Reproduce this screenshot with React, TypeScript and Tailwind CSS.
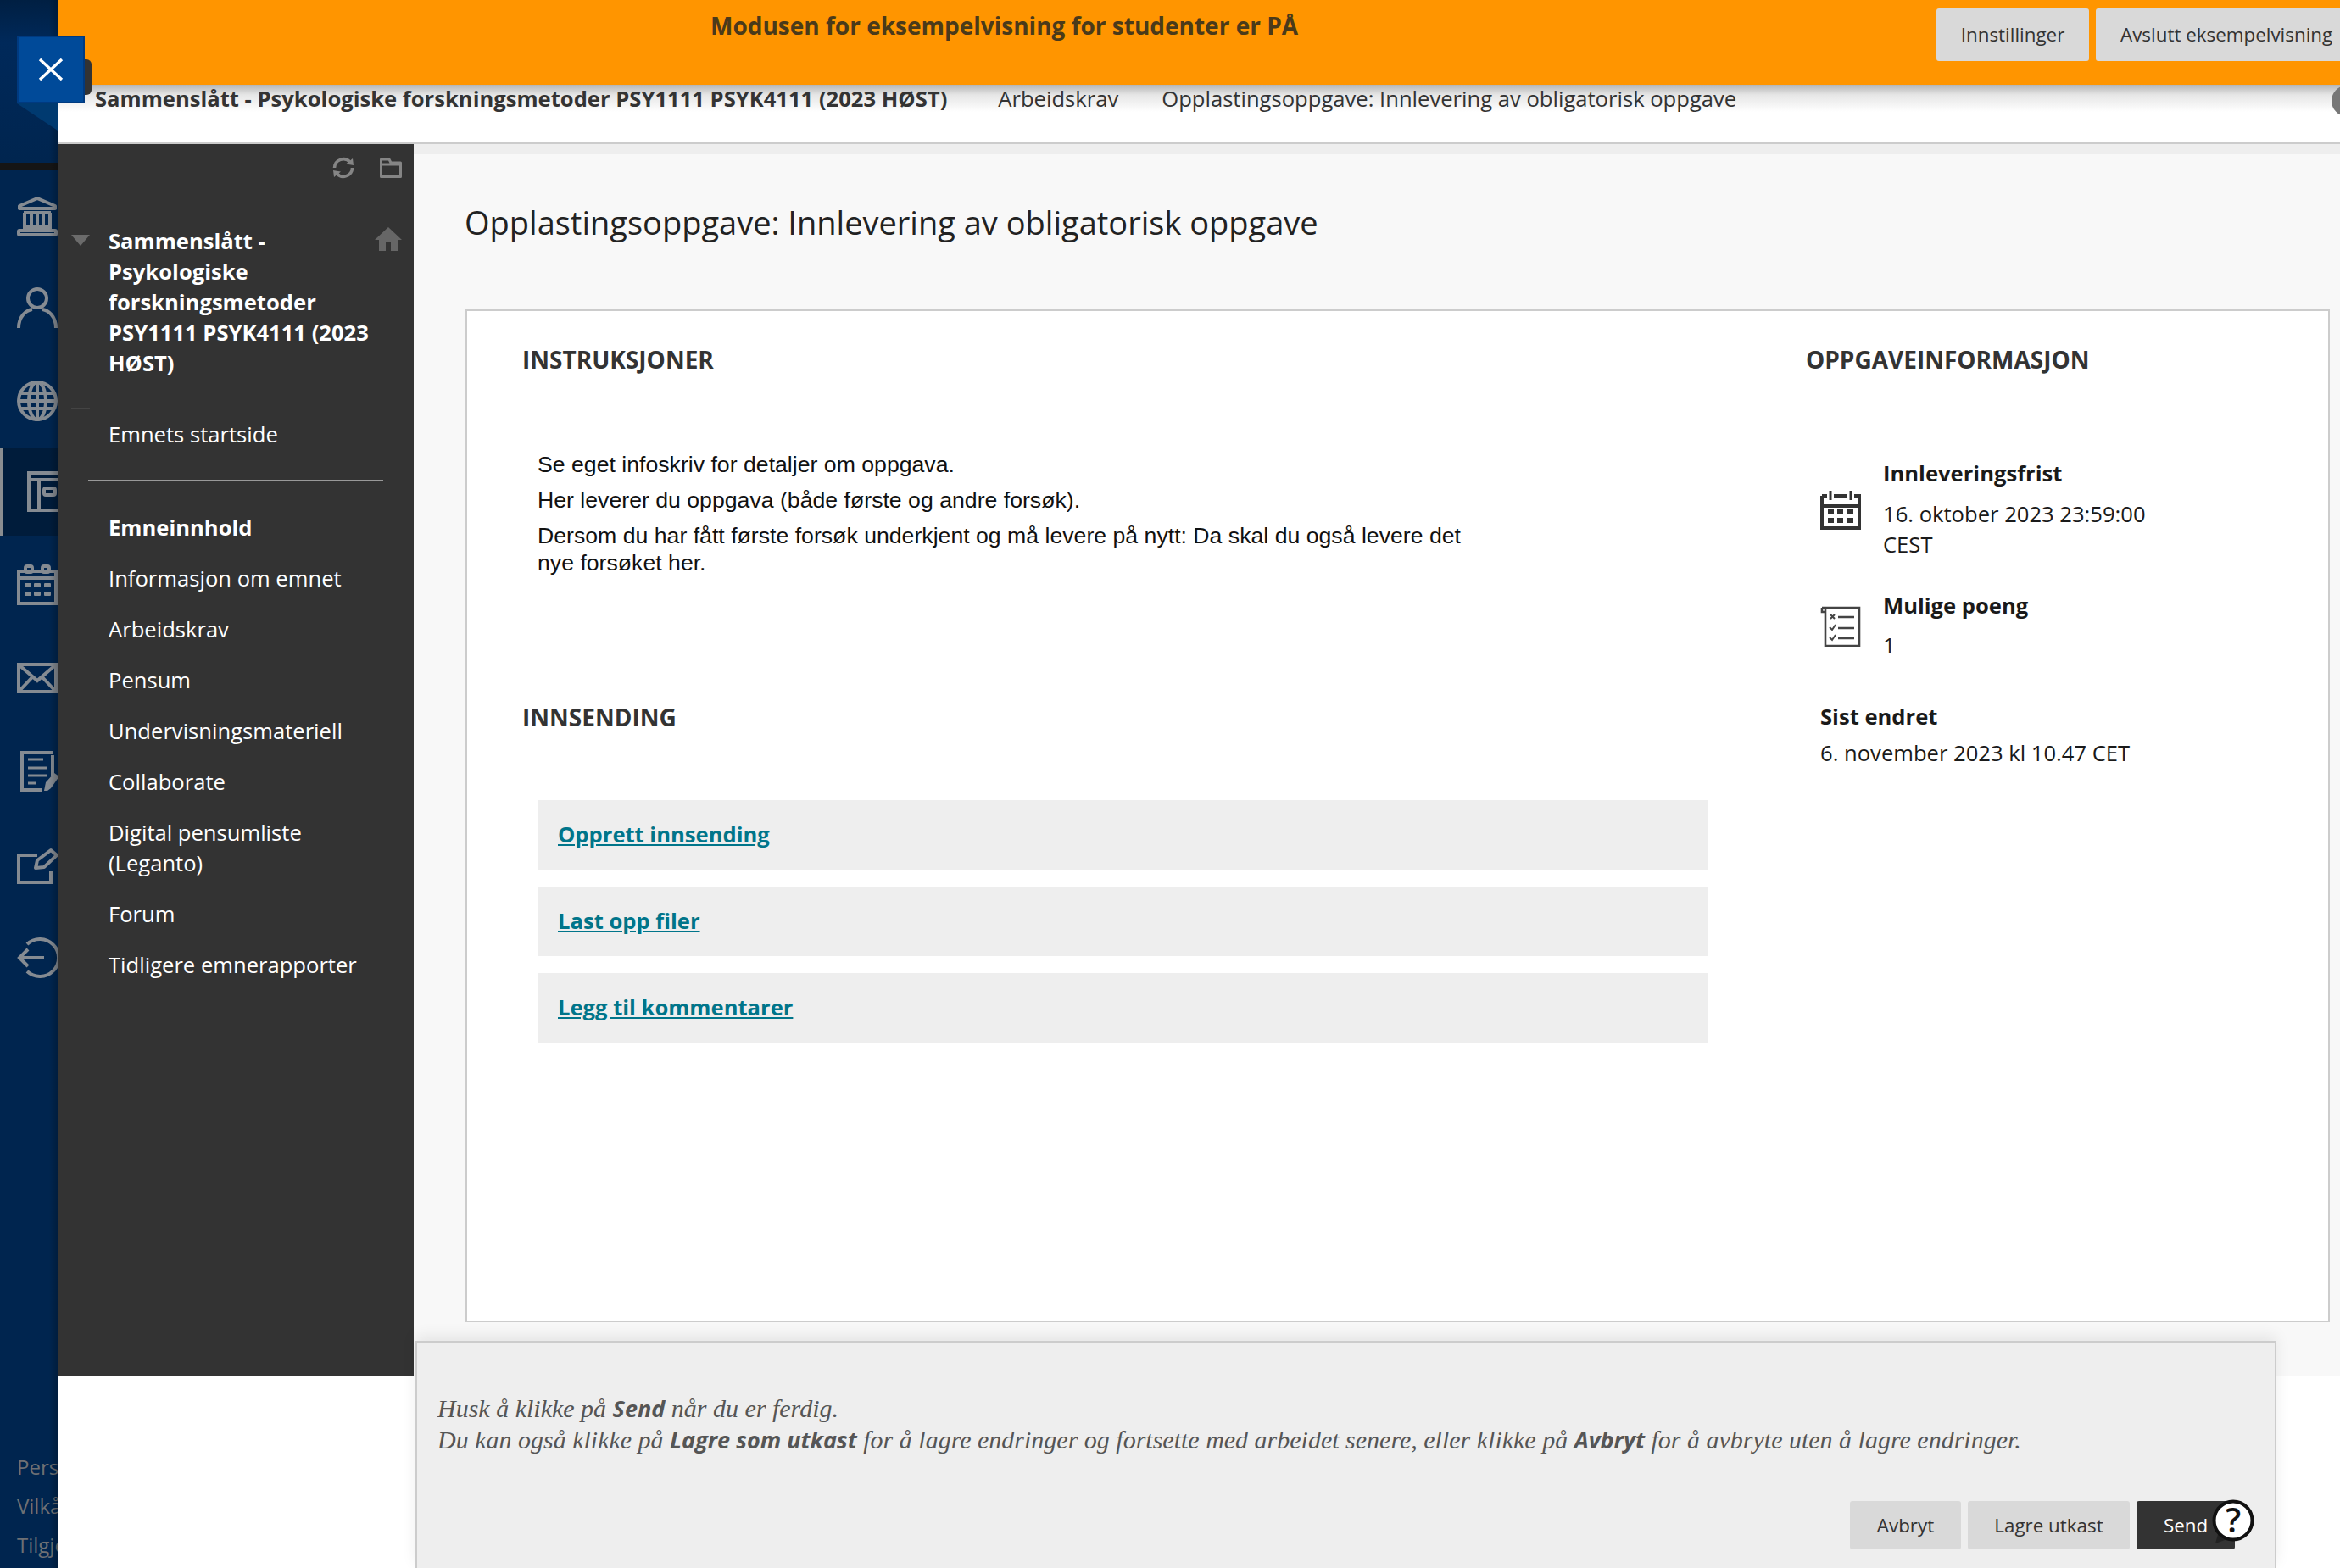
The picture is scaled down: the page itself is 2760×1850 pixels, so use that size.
import React from "react";

const railStroke = "#858b92";

function Ico({ children, vb = "0 0 48 48", className = "" }: { children: React.ReactNode; vb?: string; className?: string }) {
  return (
    <svg viewBox={vb} fill="none" stroke={railStroke} strokeWidth={4} className={className}>
      {children}
    </svg>
  );
}

function RailItem({ className, children }: { className: string; children: React.ReactNode }) {
  return <div className={`flex items-center pl-[20px] shrink-0 ${className}`}>{children}</div>;
}

function Rail() {
  return (
    <div className="relative w-[68px] shrink-0 h-full bg-[#00254f] flex flex-col overflow-hidden">
      <div className="h-[192px] shrink-0 bg-[linear-gradient(#001f42,#00295a_50px,#00254f)]" />
      <div className="h-[9px] shrink-0 bg-[#151515]" />
      <RailItem className="h-[107px]">
        <Ico className="w-[48px] h-[48px]">
          <path d="M24 3 L45 12 V15 H3 V12 Z" strokeLinejoin="round" />
          <path d="M8 20 H40 M9 20 V37 M17 20 V37 M24 20 V37 M31 20 V37 M39 20 V37 M7 37 H41" />
          <rect x="2" y="41" width="44" height="5" rx="1" />
        </Ico>
      </RailItem>
      <RailItem className="h-[110px]">
        <Ico className="w-[48px] h-[48px]">
          <circle cx="24" cy="13" r="11" />
          <path d="M2 48 C2 34 11 27 18 26 M46 48 C46 34 37 27 30 26" />
        </Ico>
      </RailItem>
      <RailItem className="h-[110px]">
        <Ico className="w-[48px] h-[48px]">
          <circle cx="24" cy="24" r="22" />
          <ellipse cx="24" cy="24" rx="10" ry="22" />
          <path d="M24 2 V46 M4 15 H44 M2 24 H46 M4 33 H44" />
        </Ico>
      </RailItem>
      <div className="h-[104px] shrink-0 bg-[#001c3b] border-l-[4px] border-[#8a8d90] flex items-center pl-[28px]">
        <Ico className="w-[48px] h-[48px] shrink-0">
          <rect x="2" y="2" width="60" height="44" />
          <path d="M2 10 H62 M14 10 V46" />
          <rect x="20" y="20" width="13" height="8" rx="2" />
        </Ico>
      </div>
      <RailItem className="h-[116px]">
        <Ico className="w-[48px] h-[48px]">
          <rect x="2" y="8" width="44" height="38" />
          <path d="M2 16 H46" />
          <rect x="10" y="2" width="8" height="7" rx="2" />
          <rect x="30" y="2" width="8" height="7" rx="2" />
          <g fill={railStroke} stroke="none">
            <rect x="9" y="22" width="8" height="5" rx="1" />
            <rect x="20" y="22" width="8" height="5" rx="1" />
            <rect x="32" y="22" width="8" height="5" rx="1" />
            <rect x="9" y="32" width="8" height="5" rx="1" />
            <rect x="20" y="32" width="8" height="5" rx="1" />
            <rect x="32" y="32" width="8" height="5" rx="1" />
          </g>
        </Ico>
      </RailItem>
      <RailItem className="h-[104px]">
        <Ico className="w-[48px] h-[36px]" vb="0 0 48 36">
          <rect x="2" y="2" width="44" height="32" />
          <path d="M3 3 L24 21 L45 3 M3 33 L18 17 M45 33 L30 17" />
        </Ico>
      </RailItem>
      <RailItem className="h-[116px]">
        <Ico className="w-[48px] h-[48px]">
          <path d="M42 30 V5 M42 2 H6 V46 H30" />
          <path d="M13 10 H31 M13 20 H36 M13 29 H36 M13 38 H22" strokeWidth={3} />
          <path d="M36 47 L32 47 L34 37 L44 26 L50 30 L40 44 Z" fill={railStroke} stroke="none" />
        </Ico>
      </RailItem>
      <RailItem className="h-[108px]">
        <Ico className="w-[48px] h-[44px]" vb="0 0 48 44">
          <path d="M40 28 V41 H2 V9 H24" />
          <path d="M22 24 L24 15 L40 3 L47 9 L32 23 Z" strokeLinejoin="round" />
        </Ico>
      </RailItem>
      <RailItem className="h-[108px]">
        <Ico className="w-[48px] h-[48px]">
          <path d="M12 8 A22 22 0 1 1 12 40" />
          <path d="M32 24 H4 M13 14 L3 24 L13 34" />
        </Ico>
      </RailItem>
      <div className="mt-auto pb-[4px] pl-[20px] text-[#6e7074] text-[24px] leading-[46px] font-['Open_Sans',sans-serif] whitespace-nowrap">
        <div>Personvern</div>
        <div>Vilkår</div>
        <div>Tilgjengelighet</div>
      </div>
      <div className="absolute top-0 right-0 bottom-0 w-[10px] bg-[linear-gradient(to_right,rgba(0,0,0,0),rgba(0,0,0,0.22))]" />
    </div>
  );
}

const menu = ["Informasjon om emnet", "Arbeidskrav", "Pensum", "Undervisningsmateriell", "Collaborate"];

function Sidebar() {
  return (
    <div className="w-[420px] shrink-0 h-[1454px] bg-[#333333] text-white text-[25.6px] leading-[36px]">
      <div className="flex justify-end gap-[30px] pt-[16px] pr-[14px] h-[50px]">
        <svg viewBox="0 0 26 24" className="w-[26px] h-[24px] overflow-visible" fill="none" stroke="#858585" strokeWidth={3.6}>
          <path d="M2.5 12 A10.5 10.5 0 0 1 21 5.5 M23.5 12 A10.5 10.5 0 0 1 5 18.5" />
          <path d="M16 7.5 L25 9 L24 1 Z M10 16.5 L1 15 L2 23 Z" fill="#858585" stroke="none" />
        </svg>
        <svg viewBox="0 0 26 24" className="w-[26px] h-[24px]" fill="none" stroke="#858585" strokeWidth={3}>
          <path d="M1.5 6 V2 H11 L13 6 H24.5 V22.5 H1.5 Z M1.5 8 H24.5" strokeLinejoin="round" />
        </svg>
      </div>
      <div className="relative pl-[60px] pr-[20px] pt-[47px] font-bold">
        <div className="absolute left-[16px] top-[57px] w-0 h-0 border-l-[11px] border-r-[11px] border-t-[13px] border-l-transparent border-r-transparent border-t-[#6b6b6b]" />
        <svg viewBox="0 0 32 28" className="absolute right-[14px] top-[48px] w-[32px] h-[28px]" fill="#666666">
          <path d="M16 0 L32 15 H27 V28 H19 V18 H13 V28 H5 V15 H0 Z" />
        </svg>
        <div className="w-[330px]">Sammenslått - Psykologiske forskningsmetoder PSY1111 PSYK4111 (2023 HØST)</div>
      </div>
      <div className="ml-[16px] mt-[34px] w-[22px] border-t border-[#444444]" />
      <div className="pl-[60px] pt-[13px] pb-[35px]">Emnets startside</div>
      <div className="ml-[36px] w-[348px] h-[2px] bg-[#999999]" />
      <div className="pl-[60px] pt-[37px]">
        <div className="font-bold pb-[24px]">Emneinnhold</div>
        {menu.map((m) => (
          <div key={m} className="pb-[24px]">{m}</div>
        ))}
        <div className="pb-[24px]">
          Digital pensumliste
          <br />
          (Leganto)
        </div>
        <div className="pb-[24px]">Forum</div>
        <div>Tidligere emnerapporter</div>
      </div>
    </div>
  );
}

function InfoColumn() {
  return (
    <div className="pt-[37px] text-[25.6px] leading-[36px] text-[#1a1a1a]">
      <h2 className="font-bold text-[28px] leading-[40px] text-[#333333] whitespace-nowrap">OPPGAVEINFORMASJON</h2>
      <div className="flex items-center mt-[97px] pl-[17px]">
        <svg viewBox="0 0 48 48" className="w-[48px] h-[48px] mr-[26px]" fill="none" stroke="#333333" strokeWidth={4}>
          <path d="M2 8 H8 M16 8 H32 M40 8 H46 V46 H2 V8 M2 20 H46" />
          <path d="M12 2 V13 M36 2 V13" strokeWidth={3} />
          <g fill="#333333" stroke="none">
            <rect x="9" y="24" width="7" height="6" />
            <rect x="20" y="24" width="7" height="6" />
            <rect x="32" y="24" width="7" height="6" />
            <rect x="9" y="34" width="7" height="6" />
            <rect x="20" y="34" width="7" height="6" />
            <rect x="32" y="34" width="7" height="6" />
          </g>
        </svg>
        <div>
          <div className="font-bold">Innleveringsfrist</div>
          <div className="mt-[12px]">16. oktober 2023 23:59:00</div>
          <div>CEST</div>
        </div>
      </div>
      <div className="flex items-center mt-[36px] pl-[17px]">
        <svg viewBox="0 0 48 48" className="w-[48px] h-[48px] mr-[26px]" fill="none" stroke="#444444" strokeWidth={2.6}>
          <path d="M6 7 V2 H2 M2 2 H46 V47 H6 V7 H2 V2" />
          <path d="M21 13 H40 M21 26 H40 M21 38 H40" strokeWidth={2.6} />
          <path d="M12 10 L17 15 M17 10 L12 15 M11 25 L14 28 L18 22 M11 37 L14 40 L18 34" strokeWidth={2} />
        </svg>
        <div>
          <div className="font-bold">Mulige poeng</div>
          <div className="mt-[11px]">1</div>
        </div>
      </div>
      <div className="mt-[48px] pl-[17px] font-bold">Sist endret</div>
      <div className="mt-[7px] pl-[17px]">6. november 2023 kl 10.47 CET</div>
    </div>
  );
}

const links = ["Opprett innsending", "Last opp filer", "Legg til kommentarer"];

function MainContent() {
  return (
    <div className="flex-1 h-[1453px] bg-[#f8f8f8] border-t-[12px] border-[#eeeeee]">
      <h1 className="pl-[60px] pt-[56px] text-[38px] leading-[48px] text-[#222222] whitespace-nowrap">
        Opplastingsoppgave: Innlevering av obligatorisk oppgave
      </h1>
      <div className="ml-[61px] mt-[79px] w-[2199px] h-[1195px] bg-white border-2 border-[#cccccc] flex">
        <div className="w-[1579px] shrink-0 pl-[65px] pt-[37px]">
          <h2 className="font-bold text-[28px] leading-[40px] text-[#333333]">INSTRUKSJONER</h2>
          <div className="mt-[88px] ml-[18px] w-[1120px] font-['Liberation_Sans',sans-serif] text-[26.67px] leading-[32px] text-[#111111]">
            <p className="mb-[10px]">Se eget infoskriv for detaljer om oppgava.</p>
            <p className="mb-[10px]">Her leverer du oppgava (både første og andre forsøk).</p>
            <p>
              Dersom du har fått første forsøk underkjent og må levere på nytt: Da skal du også levere det nye forsøket
              her.
            </p>
          </div>
          <h2 className="mt-[146px] font-bold text-[28px] leading-[40px] text-[#333333]">INNSENDING</h2>
          <div className="mt-[78px] ml-[18px] w-[1381px] flex flex-col gap-[20px]">
            {links.map((l) => (
              <div key={l} className="h-[82px] bg-[#eeeeee] pl-[24px] flex items-center">
                <a className="font-bold text-[25.6px] text-[#00758a] underline">{l}</a>
              </div>
            ))}
          </div>
        </div>
        <InfoColumn />
      </div>
    </div>
  );
}

function SubmitPanel() {
  return (
    <div className="absolute left-[490px] top-[1582px] bottom-0 w-[2195px] bg-[#eeeeee] border-2 border-b-0 border-[#cccccc] shadow-[0_-6px_16px_rgba(0,0,0,0.08)] pl-[24px] pr-[47px] pt-[59px]">
      <div className="font-['Liberation_Serif',serif] italic text-[#555555] text-[30px] leading-[37px] whitespace-nowrap">
        <div>
          Husk å klikke på <b className="font-['Open_Sans',sans-serif] text-[27px]">Send</b> når du er ferdig.
        </div>
        <div>
          Du kan også klikke på <b className="font-['Open_Sans',sans-serif] text-[27px]">Lagre som utkast</b> for å lagre
          endringer og fortsette med arbeidet senere, eller klikke på{" "}
          <b className="font-['Open_Sans',sans-serif] text-[27px]">Avbryt</b> for å avbryte uten å lagre endringer.
        </div>
      </div>
      <div className="mt-[54px] flex justify-end gap-[8px] text-[22.4px]">
        <button className="h-[57px] w-[131px] rounded-[3px] bg-[#d9d9d9] text-[#333333]">Avbryt</button>
        <button className="h-[57px] w-[191px] rounded-[3px] bg-[#d9d9d9] text-[#333333]">Lagre utkast</button>
        <button className="relative h-[57px] w-[116px] pl-[32px] text-left rounded-[3px] bg-[#333333] text-white">
          Send
          <svg viewBox="0 0 50 54" className="absolute left-[89px] top-[-2px] w-[50px] h-[54px]">
            <path d="M8 38 L4 52 L18 47 Z" fill="#222222" />
            <circle cx="25" cy="25" r="22.5" fill="#ffffff" stroke="#111111" strokeWidth={4} />
            <text x="25" y="39" textAnchor="middle" fontSize="40" fontWeight="600" fontFamily="Open Sans, sans-serif" fill="#111111">
              ?
            </text>
          </svg>
        </button>
      </div>
    </div>
  );
}

export default function App() {
  return (
    <div className="relative w-[2760px] h-[1850px] overflow-hidden bg-white flex font-['Open_Sans',sans-serif]">
      <Rail />
      <div className="flex-1 min-w-0 flex flex-col">
        <div className="h-[100px] shrink-0 bg-[#ff9500] flex text-[22.4px] text-[#333333] overflow-hidden">
          <div className="w-[2216px] shrink-0 pl-[770px] pt-[10px] font-bold text-[28px] leading-[40px] whitespace-nowrap text-[#4a3a1a]">
            Modusen for eksempelvisning for studenter er PÅ
          </div>
          <div className="flex gap-[8px] pt-[10px] shrink-0">
            <button className="h-[62px] w-[180px] rounded-[3px] bg-[#d9d9d9]">Innstillinger</button>
            <button className="h-[62px] w-[320px] pl-[29px] text-left rounded-[3px] bg-[#d9d9d9] whitespace-nowrap">
              Avslutt eksempelvisning
            </button>
          </div>
        </div>
        <div className="h-[70px] shrink-0 pt-[1px] bg-[linear-gradient(#b5b5b5,#e6e6e6_12px,#ffffff_32px)] border-b-2 border-[#cccccc] flex items-start pl-[44px] text-[25.6px] leading-[32px] text-[#333333] whitespace-nowrap overflow-hidden">
          <span className="font-bold">Sammenslått - Psykologiske forskningsmetoder PSY1111 PSYK4111 (2023 HØST)</span>
          <span className="ml-[60px]">Arbeidskrav</span>
          <span className="ml-[51px]">Opplastingsoppgave: Innlevering av obligatorisk oppgave</span>
          <span className="ml-auto -mr-[26px] w-[36px] h-[36px] rounded-full bg-[#777777] shrink-0" />
        </div>
        <div className="flex flex-1 min-h-0">
          <Sidebar />
          <MainContent />
        </div>
      </div>
      <div className="absolute left-[100px] top-[70px] w-[8px] h-[42px] rounded-r-[6px] bg-[#333333]" />
      <div className="absolute left-[20px] top-[122px] w-[48px] h-[32px] bg-[#003a70] [clip-path:polygon(0_0,100%_0,100%_100%)]" />
      <div className="absolute left-[20px] top-[42px] w-[80px] h-[80px] bg-[#004a99] border-2 border-[#003a80] flex items-center justify-center">
        <svg viewBox="0 0 30 30" className="w-[30px] h-[30px]" stroke="#ffffff" strokeWidth={3.4}>
          <path d="M2 3 L28 27 M28 3 L2 27" />
        </svg>
      </div>
      <SubmitPanel />
    </div>
  );
}
